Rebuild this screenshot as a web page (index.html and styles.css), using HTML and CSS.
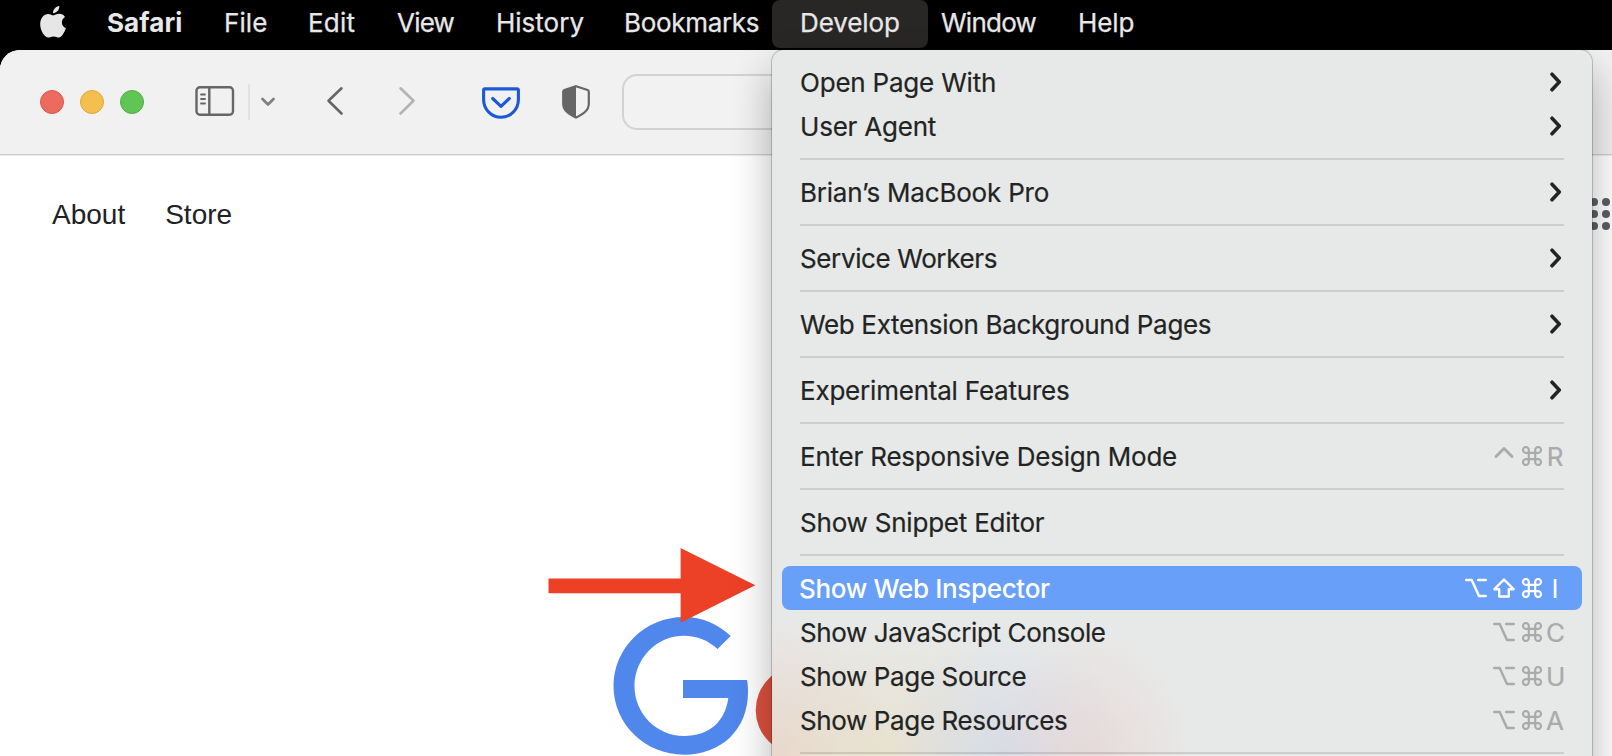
FILE: index.html
```html
<!DOCTYPE html>
<html lang="en">
<head>
<meta charset="utf-8">
<title>Safari</title>
<link rel="stylesheet" href="styles.css">
</head>
<body>
<svg class="defs" aria-hidden="true">
  <symbol id="chev" viewBox="0 0 12 20"><path d="M2 2.200 9.300 10 2 17.800" fill="none" stroke="currentColor" stroke-width="3.500" stroke-linecap="round" stroke-linejoin="round"/></symbol>
  <symbol id="cmd" viewBox="0 0 20 20"><path d="M6.800 6.800H13.200V13.200H6.800ZM6.800 6.800V4A2.900 2.900 0 1 0 4 6.800ZM13.200 6.800H16A2.900 2.900 0 1 0 13.200 4ZM13.200 13.200V16A2.900 2.900 0 1 0 16 13.200ZM6.800 13.200H4A2.900 2.900 0 1 0 6.800 16Z" fill="none" stroke="currentColor" stroke-width="2.200"/></symbol>
  <symbol id="opt" viewBox="0 0 22 20"><path d="M1.200 2H6.700L14 18H20.800M13.200 2H20.800" fill="none" stroke="currentColor" stroke-width="2.500" stroke-linecap="round" stroke-linejoin="round"/></symbol>
  <symbol id="shift" viewBox="0 0 22 20"><path d="M11 1.500 20.600 11.200H15.800V18.500H6.200V11.200H1.400Z" fill="none" stroke="currentColor" stroke-width="2.400" stroke-linejoin="round"/></symbol>
  <symbol id="ctrl" viewBox="0 0 22 20"><path d="M3 10.400 11 2.600 19 10.400" fill="none" stroke="currentColor" stroke-width="2.800" stroke-linecap="round" stroke-linejoin="round"/></symbol>
</svg>

<nav class="menubar">
  <svg class="apple" viewBox="0 0 26 32"><path d="M19.300 0C19.600 3.900 16.600 7 13 7.200 12.700 3.700 15.800 .400 19.300 0ZM13.300 9.400C14.800 9.400 16.600 7.800 19.300 7.800 21.600 7.800 23.700 9 25 10.900 20.500 13.600 21 20 25.900 22.300 24.800 25.500 21.900 31.500 18.800 31.500 16.900 31.500 16 30.400 13.600 30.400 11.100 30.400 10.200 31.500 8.300 31.500 4.500 31.500 .200 24.700 .200 18.300 .200 12 4.100 8 8.200 8 10.500 8 12.200 9.400 13.300 9.400Z" fill="#e6e6e6"/></svg>
  <span class="mb safari">Safari</span><span class="mb file">File</span><span class="mb edit">Edit</span><span class="mb view">View</span><span class="mb history">History</span><span class="mb bookmarks">Bookmarks</span><span class="mb develop">Develop</span><span class="mb window">Window</span><span class="mb help">Help</span>
</nav>

<main class="browser">
  <header class="toolbar">
    <div class="lights"><i class="red"></i><i class="yellow"></i><i class="green"></i></div>
    <svg class="sidebar" viewBox="0 0 40 32"><g fill="none" stroke="#666" stroke-width="2.400"><rect x="1.500" y="2.200" width="36.500" height="27.600" rx="3.500"/><path d="M14.300 2V30"/><path d="M6 9.500h4M6 14h4M6 18.500h4" stroke-width="1.800" stroke-linecap="round"/></g></svg>
    <i class="divider"></i>
    <svg class="down" viewBox="0 0 16 12"><path d="M2.500 3 8 8.500 13.500 3" fill="none" stroke="#808082" stroke-width="2.700" stroke-linecap="round" stroke-linejoin="round"/></svg>
    <svg class="back" viewBox="0 0 18 30"><path d="M15.500 2.300 2.500 14.800 15.500 27.500" fill="none" stroke="#666" stroke-width="2.600" stroke-linecap="round" stroke-linejoin="round"/></svg>
    <svg class="fwd" viewBox="0 0 18 30"><path d="M2.500 2.300 15.500 14.800 2.500 27.500" fill="none" stroke="#b3b3b3" stroke-width="2.600" stroke-linecap="round" stroke-linejoin="round"/></svg>
    <svg class="pocket" viewBox="0 0 38 32"><g fill="none" stroke="#1b59d9" stroke-width="3.100" stroke-linejoin="round"><path d="M3 1.900H35Q36.400 1.900 36.400 3.300V12.500C36.400 22.500 28.500 30.300 19 30.300S1.600 22.500 1.600 12.500V3.300Q1.600 1.900 3 1.900Z"/><path d="M10.700 11.500 19 19.300 27.300 11.500" stroke-linecap="round"/></g></svg>
    <svg class="shield" viewBox="0 0 28 34"><path d="M14 1.200 25.600 5Q26.800 5.500 26.800 6.800V19C26.800 26 20 29.500 14 32.600 8 29.500 1.200 26 1.200 19V6.800Q1.200 5.500 2.400 5Z" fill="none" stroke="#666" stroke-width="2.200"/><path d="M14 1 2 5Q1 5.500 1 7V19C1 26 8 29.500 14 32.600Z" fill="#666"/></svg>
    <div class="address"></div>
  </header>
  <section class="page">
    <a class="about">About</a><a class="store">Store</a>
    <svg class="apps" viewBox="0 0 32 32"><g fill="#5b5e64"><circle cx="4" cy="4" r="4"/><circle cx="16" cy="4" r="4"/><circle cx="28" cy="4" r="4"/><circle cx="4" cy="16" r="4"/><circle cx="16" cy="16" r="4"/><circle cx="28" cy="16" r="4"/><circle cx="4" cy="28" r="4"/><circle cx="16" cy="28" r="4"/><circle cx="28" cy="28" r="4"/></g></svg>
  </section>
</main>

<svg class="art" viewBox="540 540 310 216">
  <path d="M730.700 636C718 624 702 617 684 617 645 617 613.500 648 613.500 686S645 754.700 684 754.700C722 754.700 748 729 748 692 748 687 747.700 683 747 680H683V698H728.300C725 722 709 736 684 736 656 736 634.500 713 634.500 686S656 635.700 684 635.700C697 635.700 708.500 640.500 717.500 649Z" fill="#5087ec"/>
  <circle cx="800" cy="710" r="44.300" fill="#dc513f"/>
  <path d="M548.500 578.500H680.600V548L755.300 585.300 680.600 622.700V593.200H548.500Z" fill="#ec4126"/>
</svg>

<div class="menu">
  <div class="item"><span>Open Page With</span><svg class="arrow"><use href="#chev"/></svg></div>
  <div class="item"><span>User Agent</span><svg class="arrow"><use href="#chev"/></svg></div>
  <hr>
  <div class="item"><span>Brian’s MacBook Pro</span><svg class="arrow"><use href="#chev"/></svg></div>
  <hr>
  <div class="item tight"><span>Service Workers</span><svg class="arrow"><use href="#chev"/></svg></div>
  <hr>
  <div class="item long"><span>Web Extension Background Pages</span><svg class="arrow"><use href="#chev"/></svg></div>
  <hr>
  <div class="item"><span>Experimental Features</span><svg class="arrow"><use href="#chev"/></svg></div>
  <hr>
  <div class="item"><span>Enter Responsive Design Mode</span><div class="keys"><svg><use href="#ctrl"/></svg><svg class="c"><use href="#cmd"/></svg><b>R</b></div></div>
  <hr>
  <div class="item"><span>Show Snippet Editor</span></div>
  <hr>
  <div class="item selected"><span>Show Web Inspector</span><div class="keys"><svg><use href="#opt"/></svg><svg><use href="#shift"/></svg><svg class="c"><use href="#cmd"/></svg><b>I</b></div></div>
  <div class="item tight"><span>Show JavaScript Console</span><div class="keys"><svg><use href="#opt"/></svg><svg class="c"><use href="#cmd"/></svg><b>C</b></div></div>
  <div class="item tight"><span>Show Page Source</span><div class="keys"><svg><use href="#opt"/></svg><svg class="c"><use href="#cmd"/></svg><b>U</b></div></div>
  <div class="item tight"><span>Show Page Resources</span><div class="keys"><svg><use href="#opt"/></svg><svg class="c"><use href="#cmd"/></svg><b>A</b></div></div>
  <hr>
</div>
</body>
</html>
```
FILE: styles.css
```css
* { box-sizing: border-box; }
body {
  margin: 0;
  height: 756px;
  overflow: hidden;
  position: relative;
  background: #000;
  font: 400 26px/46px Inter, sans-serif;
  color: #222423;
}
svg { display: block; flex: none; }
.defs { position: absolute; width: 0; height: 0; }

/* Menu bar */
.menubar { height: 50px; display: flex; color: #e8e8e8; padding-left: 40px; }
.apple { width: 26px; height: 32px; margin: 6px 27px 0 0; }
.mb { height: 48px; line-height: 46px; padding-left: 14px; border-radius: 8px; white-space: nowrap; letter-spacing: -.1px; -webkit-text-stroke: .25px; }
.safari { width: 117px; font-weight: 700; letter-spacing: .1px; -webkit-text-stroke: 0; }
.file { width: 84px; letter-spacing: .1px; }
.edit { width: 89px; letter-spacing: .2px; }
.view { width: 98px; letter-spacing: -.8px; }
.history { width: 129px; letter-spacing: 0; padding-left: 15px; }
.bookmarks { width: 162px; letter-spacing: -.32px; padding-left: 14px; }
.develop { width: 156px; padding-left: 28px; background: #282726; }
.window { width: 136px; padding-left: 13px; letter-spacing: -.75px; }

/* Browser window */
.browser { height: 706px; background: #fff; border-radius: 20px 0 0 0; overflow: hidden; }
.toolbar { height: 105px; background: #f1f1f1; border-bottom: 1px solid #cfcfcf; box-shadow: 0 1px #e9e9e9; display: flex; align-items: center; padding-left: 40px; }
.lights { display: flex; gap: 16px; }
.lights i { width: 24px; height: 24px; border-radius: 50%; border: 1px solid; }
.lights .red { background: #ed6a5e; border-color: #d9564b; }
.lights .yellow { background: #f5bf4f; border-color: #dda73c; }
.lights .green { background: #61c554; border-color: #4fac43; }
.sidebar { width: 40px; height: 32px; margin: -2px 0 0 51px; }
.divider { width: 2px; height: 36px; background: #e2e2e2; margin-left: 13px; }
.down { width: 16px; height: 12px; margin: -1px 0 0 10px; }
.back { width: 18px; height: 30px; margin: -2px 0 0 50px; }
.fwd { width: 18px; height: 30px; margin: -2px 0 0 54px; }
.pocket { width: 38px; height: 32px; margin: 2px 0 0 66px; }
.shield { width: 28px; height: 34px; margin: -1px 0 0 42px; }
.address { width: 700px; height: 56px; flex: none; border: 2px solid #d2d2d2; border-radius: 15px; margin-left: 32px; background: #f2f2f2; }
.page { display: flex; align-items: center; height: 118px; padding-left: 52px; font: 28px "Liberation Sans", Arial, sans-serif; color: #202124; }
.page a { padding-top: 2px; }
.store { margin-left: 40px; flex: 1; }
.apps { width: 32px; height: 32px; margin-right: 2px; }

/* Logo and pointer drawn over the page */
.art { position: absolute; left: 540px; top: 540px; width: 310px; height: 216px; }

/* Drop-down menu */
.menu {
  position: absolute;
  left: 772px;
  top: 50px;
  width: 820px;
  height: 740px;
  padding: 10px;
  border-radius: 12px;
  background:
    radial-gradient(ellipse 105px 140px at 318px 715px, rgba(232, 210, 208, .65), transparent),
    radial-gradient(ellipse 120px 140px at 235px 715px, rgba(206, 214, 232, .7), transparent),
    radial-gradient(ellipse 150px 150px at 115px 720px, rgba(232, 222, 198, .8), transparent),
    radial-gradient(ellipse 120px 150px at 0 715px, rgba(234, 206, 194, .75), transparent),
    #e7e9e8;
  box-shadow: 0 0 0 1px rgba(0, 0, 0, .2), 0 20px 40px rgba(0, 0, 0, .3);
}
.item { height: 44px; padding: 0 18px; display: flex; justify-content: space-between; border-radius: 8px; letter-spacing: -.21px; white-space: nowrap; -webkit-text-stroke: .2px; }
.tight { letter-spacing: -.38px; }
.long { letter-spacing: -.33px; }
.menu hr { height: 2px; border: 0; margin: 10px 18px; background: rgba(0, 0, 0, .115); }
.arrow { width: 12px; height: 20px; margin: 12px 2px 0 0; }
.keys { display: flex; align-items: center; color: #a9abaa; }
.keys svg { width: 22px; height: 20px; margin: 0 6px 0 0; }
.keys .c { width: 20px; margin: 0 4px 0 1px; }
.keys b { width: 18px; text-align: center; font-weight: 400; letter-spacing: 0; line-height: 46px; height: 44px; }
.selected { background: #689ff9; color: #fff; font-weight: 500; letter-spacing: -.33px; -webkit-text-stroke: 0; }
.selected .keys { color: #fff; }
.selected span { margin-left: -1px; }
```
